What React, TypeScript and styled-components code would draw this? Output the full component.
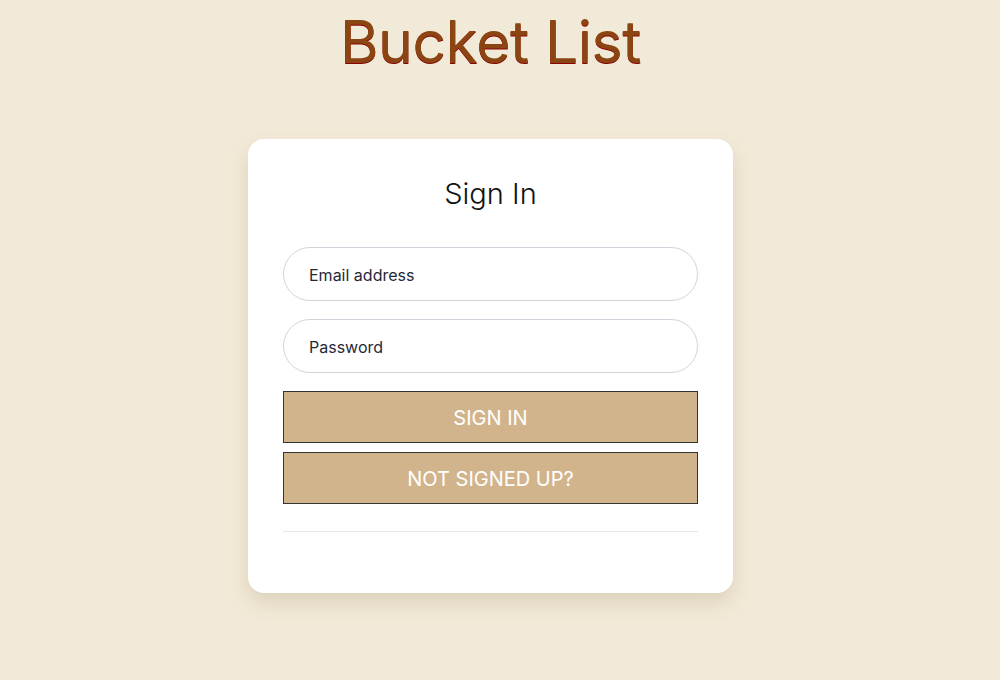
import React from "react";
import styled, { createGlobalStyle } from "styled-components";

const Global = createGlobalStyle`
  html, body { margin: 0; padding: 0; }
  body {
    background: #f2ead8;
    font-family: Inter, "Helvetica Neue", Arial, sans-serif;
    min-height: 680px;
  }
  * { box-sizing: border-box; }
`;

const Page = styled.div`
  display: flex;
  flex-direction: column;
  align-items: center;
  padding-right: 19px;
`;

const Title = styled.h1`
  margin: 5px 0 0;
  font-size: 59px;
  line-height: 74px;
  font-weight: 400;
  color: #8b4513;
  text-shadow: 0 1px 0 #8b0000;
  letter-spacing: -0.5px;
`;

const Card = styled.div`
  margin-top: 60px;
  width: 485px;
  background: #fff;
  border-radius: 16px;
  box-shadow: 0 10px 20px rgba(120, 100, 60, 0.18);
  padding: 36px 35px 61px;
  display: flex;
  flex-direction: column;
`;

const Heading = styled.h2`
  margin: 0 0 34px;
  text-align: center;
  font-size: 29px;
  line-height: 38px;
  font-weight: 300;
  color: #111;
`;

const Input = styled.input`
  width: 100%;
  height: 54px;
  border: 1px solid #d1d5db;
  border-radius: 27px;
  padding: 2px 25px 0;
  font-family: inherit;
  font-size: 16px;
  color: #1f2937;
  margin-bottom: 18px;
  outline: none;
  &::placeholder { color: #1f2937; opacity: 1; }
`;

const Button = styled.button<{ $gap?: number }>`
  width: 100%;
  height: 52px;
  padding: 2px 0 0;
  background: #d2b48c;
  border: 1px solid #333;
  color: #fff;
  font-family: inherit;
  font-size: 20px;
  text-transform: uppercase;
  margin-bottom: ${(p) => p.$gap ?? 0}px;
  cursor: pointer;
`;

const Divider = styled.hr`
  margin: 27px 0 0;
  border: 0;
  border-top: 1px solid #e5e7eb;
`;

export default function App() {
  return (
    <>
      <Global />
      <Page>
        <Title>Bucket List</Title>
        <Card>
          <Heading>Sign In</Heading>
          <Input type="email" placeholder="Email address" />
          <Input type="password" placeholder="Password" />
          <Button $gap={9}>Sign In</Button>
          <Button>Not signed up?</Button>
          <Divider />
        </Card>
      </Page>
    </>
  );
}
